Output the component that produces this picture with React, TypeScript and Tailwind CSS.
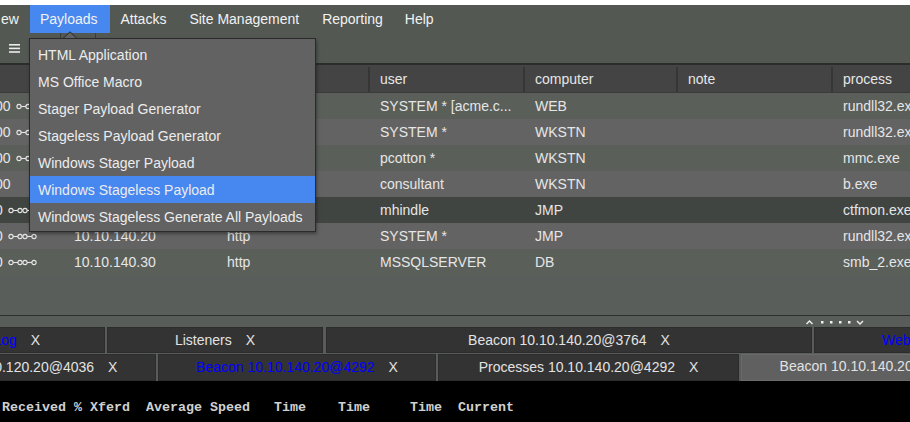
import React from "react";

const rows = [
  { pre: "00", icon: 16, ip: "10.10.120.100", lis: "http", user: "SYSTEM * [acme.c...", comp: "WEB", proc: "rundll32.exe", bg: "bg-[#5a5f5a]" },
  { pre: "00", icon: 16, ip: "10.10.120.100", lis: "smb", user: "SYSTEM *", comp: "WKSTN", proc: "rundll32.exe", bg: "bg-[#636363]" },
  { pre: "00", icon: 16, ip: "10.10.120.100", lis: "smb", user: "pcotton *", comp: "WKSTN", proc: "mmc.exe", bg: "bg-[#5a5f5a]" },
  { pre: "00", icon: 0, ip: "10.10.120.100", lis: "http", user: "consultant", comp: "WKSTN", proc: "b.exe", bg: "bg-[#636363]" },
  { pre: "0", icon: 8, ip: "10.10.140.20", lis: "http", user: "mhindle", comp: "JMP", proc: "ctfmon.exe", bg: "bg-[#414541]" },
  { pre: "0", icon: 8, ip: "10.10.140.20", lis: "http", user: "SYSTEM *", comp: "JMP", proc: "rundll32.exe", bg: "bg-[#636363]" },
  { pre: "0", icon: 8, ip: "10.10.140.30", lis: "http", user: "MSSQLSERVER", comp: "DB", proc: "smb_2.exe", bg: "bg-[#5a5f5a]" },
];

const menuItems = [
  "HTML Application",
  "MS Office Macro",
  "Stager Payload Generator",
  "Stageless Payload Generator",
  "Windows Stager Payload",
  "Windows Stageless Payload",
  "Windows Stageless Generate All Payloads",
];

function Chain({ left }: { left: number }) {
  return (
    <svg width="30" height="9" viewBox="0 0 30 9" className="absolute top-[9px]" style={{ left }}>
      <g stroke="#e6e6e6" strokeWidth="1.1" fill="none">
        <circle cx="3" cy="4.5" r="2.1" />
        <line x1="5.1" y1="4.5" x2="9.9" y2="4.5" />
        <circle cx="12" cy="4.5" r="2.1" />
        <circle cx="17" cy="4.5" r="2.1" />
        <line x1="19.1" y1="4.5" x2="23.9" y2="4.5" />
        <circle cx="26" cy="4.5" r="2.1" />
      </g>
    </svg>
  );
}

function Tab({
  label,
  blue,
  active,
  className,
}: {
  label: string;
  blue?: boolean;
  active?: boolean;
  className: string;
}) {
  return (
    <div
      className={
        "flex h-full shrink-0 items-center justify-center border " +
        (active ? "bg-[#606060] border-[#6a6a6a] pb-[2px] " : "bg-[#333333] border-[#2c2c2c] ") +
        className
      }
    >
      <span className={"whitespace-nowrap " + (blue ? "text-[#0000ff]" : "text-[#e2e2e2]")}>{label}</span>
      <span className="ml-[14px] text-[#e2e2e2]">X</span>
    </div>
  );
}

export default function App() {
  const cell = "h-full flex items-center pl-[10px] whitespace-nowrap overflow-hidden";
  return (
    <div className="relative flex h-[422px] w-[910px] flex-col overflow-hidden bg-[#5a5e5a] font-['Liberation_Sans',Arial,sans-serif] text-[14px] text-[#e6e6e6]">
      <div className="h-[5px] shrink-0 bg-white" />
      {/* menu bar */}
      <div className="flex h-[28px] shrink-0 items-stretch bg-[#535853] text-[#f2f2f2]">
        <span className="flex items-center pl-[1px] pr-[11px]">ew</span>
        <span className="flex items-center bg-[#4787f0] pl-[10px] pr-[12px]">Payloads</span>
        <span className="flex items-center px-[11px]">Attacks</span>
        <span className="flex items-center px-[12px]">Site Management</span>
        <span className="flex items-center px-[11px]">Reporting</span>
        <span className="flex items-center px-[11px]">Help</span>
      </div>
      {/* toolbar */}
      <div className="relative flex h-[30px] shrink-0 items-center bg-[#535853] pl-[9px]">
        <svg width="12" height="9" viewBox="0 0 12 9">
          <rect x="0" y="0" width="11" height="1.6" fill="#ececec" />
          <rect x="0" y="3.6" width="11" height="1.6" fill="#ececec" />
          <rect x="0" y="7.2" width="11" height="1.6" fill="#ececec" />
        </svg>
        <span className="absolute left-[60px] top-0 h-[6px] w-px bg-[#3a3d3a]" />
        <span className="absolute left-[95px] top-0 h-[6px] w-px bg-[#3a3d3a]" />
      </div>
      <div className="h-[2px] shrink-0 bg-[#2b2d2b]" />
      {/* table header */}
      <div className="flex h-[28px] shrink-0 border-b border-[#3a3a3a] bg-[#444444] pt-[2px] text-[#e6e6e6]">
        <div className="h-full w-[64px] shrink-0 border-r-2 border-[#363636]" />
        <div className="h-full w-[153px] shrink-0 border-r-2 border-[#363636]" />
        <div className="h-full w-[153px] shrink-0 border-r-2 border-[#363636]" />
        <div className={cell + " w-[155px] shrink-0 border-r-2 border-[#363636]"}>user</div>
        <div className={cell + " w-[153px] shrink-0 border-r-2 border-[#363636]"}>computer</div>
        <div className={cell + " w-[155px] shrink-0 border-r-2 border-[#363636]"}>note</div>
        <div className={cell + " flex-1"}>process</div>
      </div>
      {/* rows */}
      <div className="flex shrink-0 flex-col">
        {rows.map((r, i) => (
          <div key={i} className={"flex h-[26px] " + r.bg}>
            <div className="relative flex h-full w-[64px] shrink-0 items-center overflow-hidden">
              <span className="ml-[-5px]">{r.pre}</span>
              {r.icon ? <Chain left={r.icon} /> : null}
            </div>
            <div className={cell + " w-[153px] shrink-0"}>{r.ip}</div>
            <div className={cell + " w-[153px] shrink-0"}>{r.lis}</div>
            <div className={cell + " w-[155px] shrink-0"}>{r.user}</div>
            <div className={cell + " w-[153px] shrink-0"}>{r.comp}</div>
            <div className={cell + " w-[155px] shrink-0"} />
            <div className={cell + " flex-1"}>{r.proc}</div>
          </div>
        ))}
      </div>
      <div className="h-[40px] shrink-0 bg-[#5a5e5a]" />
      <div className="h-px shrink-0 bg-[#2e302e]" />
      {/* splitter strip */}
      <div className="flex h-[11px] shrink-0 items-center bg-[#595d59] pl-[806px]">
        <svg width="60" height="8" viewBox="0 0 60 8">
          <polyline points="0.5,6 3.5,3 6.5,6" stroke="#f0f0f0" strokeWidth="1.4" fill="none" />
          <rect x="15" y="3" width="2.5" height="2.5" fill="#f0f0f0" />
          <rect x="24" y="3" width="2.5" height="2.5" fill="#f0f0f0" />
          <rect x="33" y="3" width="2.5" height="2.5" fill="#f0f0f0" />
          <rect x="42" y="3" width="2.5" height="2.5" fill="#f0f0f0" />
          <polyline points="51,3 54,6 57,3" stroke="#f0f0f0" strokeWidth="1.4" fill="none" />
        </svg>
      </div>
      {/* tab row 1 */}
      <div className="flex h-[26px] shrink-0 gap-[2px] bg-[#595d59]">
        <Tab label="Event Log" blue className="ml-[-111px] w-[216px]" />
        <Tab label="Listeners" className="w-[216px]" />
        <Tab label="Beacon 10.10.140.20@3764" className="ml-px w-[486px]" />
        <Tab label="Web Log" blue className="w-[215px]" />
      </div>
      {/* tab row 2 */}
      <div className="mt-px flex h-[27px] shrink-0 gap-[2px] bg-[#595d59]">
        <Tab label="Beacon 10.10.120.20@4036" className="ml-[-123px] w-[279px]" />
        <Tab label="Beacon 10.10.140.20@4292" blue className="w-[278px]" />
        <Tab label="Processes 10.10.140.20@4292" className="w-[301px]" />
        <Tab label="Beacon 10.10.140.20@4292" active className="w-[279px]" />
      </div>
      {/* console */}
      <div className="flex-1 bg-black pl-[2px] pt-[18px] font-['Liberation_Mono','Courier_New',monospace] text-[13.33px] font-bold text-[#d0d0d0]">
        <pre className="whitespace-pre font-['Liberation_Mono','Courier_New',monospace] leading-[18px]">
          {"Received % Xferd  Average Speed   Time    Time     Time  Current"}
        </pre>
      </div>

      {/* dropdown */}
      <svg width="16" height="8" viewBox="0 0 16 8" className="absolute left-[62px] top-[31px] z-20">
        <polygon points="1,7.5 8,0.8 15,7.5" fill="#626262" stroke="#2a2a2a" strokeWidth="1" />
      </svg>
      <div className="absolute left-[29px] top-[38px] z-10 w-[287px] border border-[#2a2a2a] bg-[#626262] pb-px pt-[2px] shadow-[1px_2px_3px_rgba(0,0,0,0.35)]">
        {menuItems.map((m, i) => (
          <div
            key={m}
            className={"flex h-[27px] items-center pl-[8px] pt-px text-[#ececec] " + (i === 5 ? "bg-[#4787f0]" : "")}
          >
            {m}
          </div>
        ))}
      </div>
    </div>
  );
}
